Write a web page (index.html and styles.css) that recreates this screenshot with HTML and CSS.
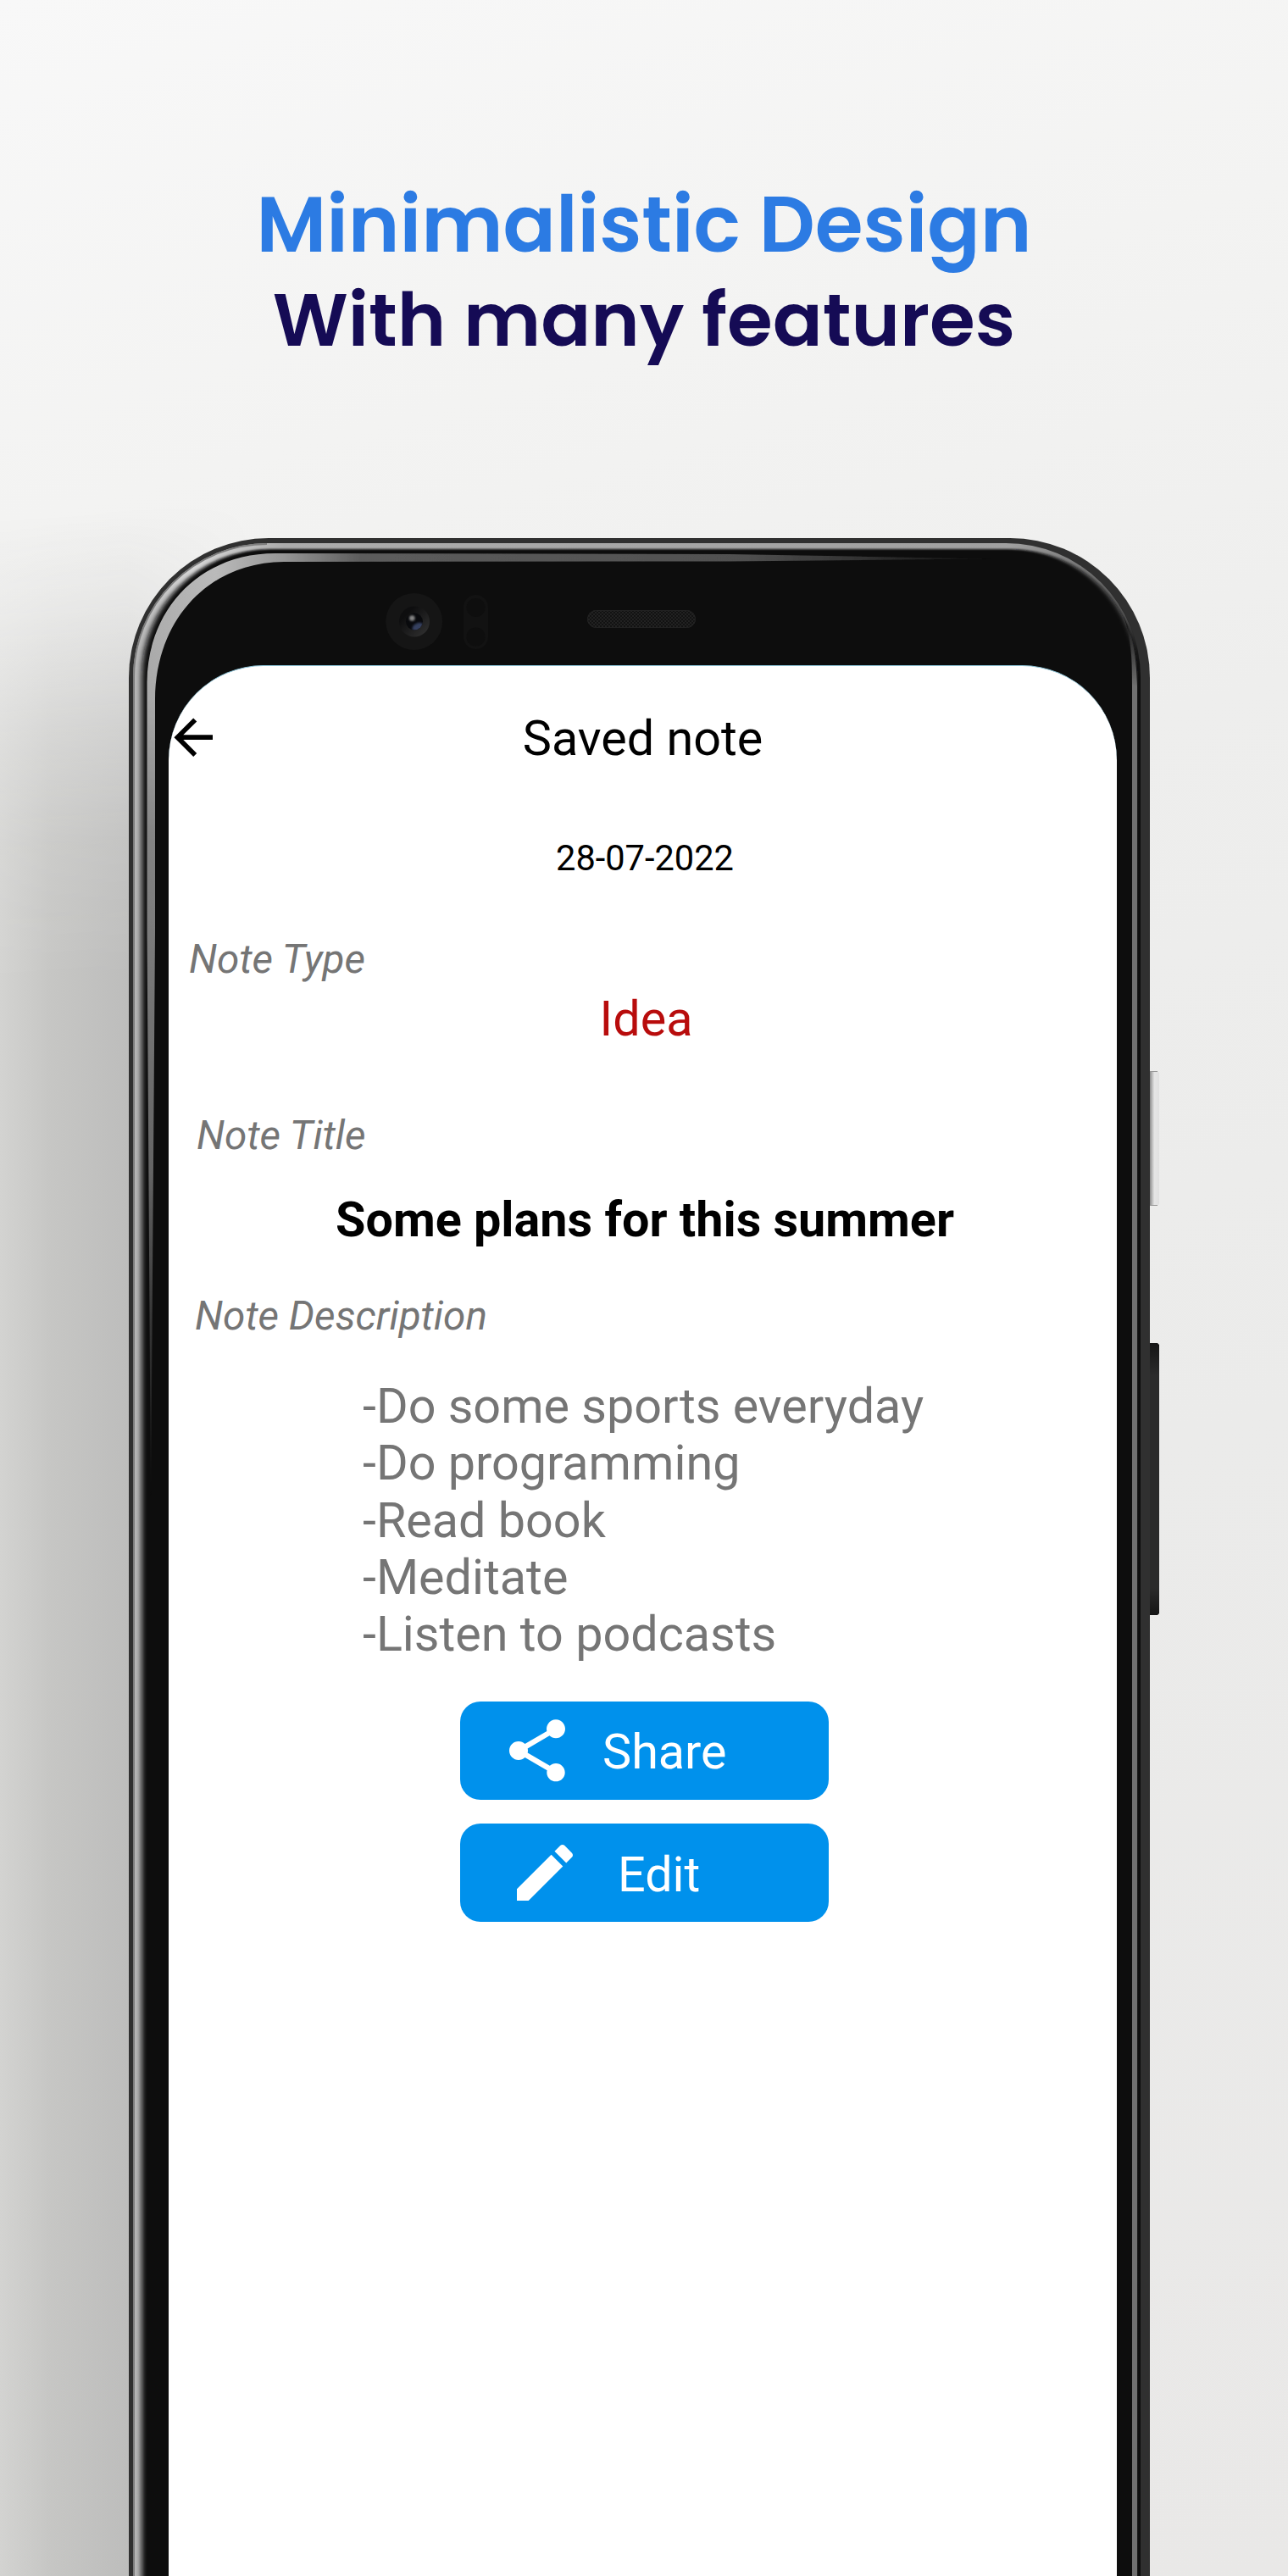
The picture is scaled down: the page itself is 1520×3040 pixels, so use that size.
FILE: index.html
```html
<!DOCTYPE html>
<html lang="en">
<head>
<meta charset="utf-8">
<title>Minimalistic Design</title>
<link rel="stylesheet" href="styles.css">
</head>
<body>
<main class="poster">
  <div class="shade"></div>
  <h1 class="headline">
    <span class="headline-top">Minimalistic Design</span>
    <span class="headline-sub">With many features</span>
  </h1>

  <svg class="phone" width="1520" height="3040" viewBox="0 0 1520 3040" aria-hidden="true">
    <defs>
      <linearGradient id="rim" gradientUnits="userSpaceOnUse" x1="157" y1="0" x2="1346" y2="0">
        <stop offset="0" stop-color="#b4b4b4"/>
        <stop offset=".06" stop-color="#d6d6d6"/>
        <stop offset=".15" stop-color="#acacac"/>
        <stop offset=".87" stop-color="#a0a0a0"/>
        <stop offset=".95" stop-color="#767676"/>
        <stop offset=".985" stop-color="#666"/>
        <stop offset="1" stop-color="#0d0d0d"/>
      </linearGradient>
      <linearGradient id="shine" gradientUnits="userSpaceOnUse" x1="174" y1="0" x2="1180" y2="0">
        <stop offset="0" stop-color="#b0b0b0"/>
        <stop offset=".08" stop-color="#bbb"/>
        <stop offset=".16" stop-color="#979797"/>
        <stop offset=".25" stop-color="#5c5c5c"/>
        <stop offset=".7" stop-color="#505050"/>
        <stop offset="1" stop-color="#0d0d0d"/>
      </linearGradient>
      <linearGradient id="fade" gradientUnits="userSpaceOnUse" x1="0" y1="640" x2="0" y2="1780">
        <stop offset="0" stop-color="#fff"/>
        <stop offset=".16" stop-color="#f4f4f4"/>
        <stop offset=".3" stop-color="#bbb"/>
        <stop offset=".65" stop-color="#8a8a8a"/>
        <stop offset=".8" stop-color="#444"/>
        <stop offset="1" stop-color="#000"/>
      </linearGradient>
      <linearGradient id="edge" gradientUnits="userSpaceOnUse" x1="0" y1="725" x2="0" y2="810">
        <stop offset="0" stop-color="#0d0d0d"/>
        <stop offset="1" stop-color="#707070"/>
      </linearGradient>
      <linearGradient id="power" x1="0" y1="0" x2="1" y2="0">
        <stop offset="0" stop-color="#8c8c8c"/>
        <stop offset=".35" stop-color="#cfcfcf"/>
        <stop offset=".5" stop-color="#e5e5e5"/>
        <stop offset="1" stop-color="#e0e0e0"/>
      </linearGradient>
      <linearGradient id="volume" x1="0" y1="0" x2="0" y2="1">
        <stop offset="0" stop-color="#151515"/>
        <stop offset=".12" stop-color="#2b2b2b"/>
        <stop offset=".9" stop-color="#2b2b2b"/>
        <stop offset="1" stop-color="#151515"/>
      </linearGradient>
      <linearGradient id="lens" x1="0" y1="0" x2="1" y2="1">
        <stop offset=".25" stop-color="#0e0e0f"/>
        <stop offset="1" stop-color="#343434"/>
      </linearGradient>
      <pattern id="mesh" width="4" height="4" patternUnits="userSpaceOnUse">
        <path d="M0 0h2v2H0zM2 2h2v2H2z" fill="#222"/>
      </pattern>
      <filter id="soft" filterUnits="userSpaceOnUse" x="100" y="600" width="1300" height="2500"><feGaussianBlur stdDeviation="3.2 1.1"/></filter>
      <filter id="slight" filterUnits="userSpaceOnUse" x="100" y="600" width="1300" height="2500"><feGaussianBlur stdDeviation=".7"/></filter>
      <filter id="spot" x="-50%" y="-50%" width="200%" height="200%"><feGaussianBlur stdDeviation="1"/></filter>
      <mask id="drop" maskUnits="userSpaceOnUse" x="150" y="630" width="1210" height="1200"><rect x="150" y="630" width="1210" height="1200" fill="url(#fade)"/></mask>
      <clipPath id="inner"><rect x="157" y="641" width="1189" height="2600" rx="157"/></clipPath>
      <clipPath id="pupil"><circle cx="489" cy="733.5" r="10"/></clipPath>
    </defs>

    <path d="M1357 1264h9l2 2v155l-2 2h-9z" fill="url(#power)"/>
    <path d="M1357 1264.5h9M1357 1422.5h9" stroke="#999"/>
    <path d="M1357 1585h9l2 2v317l-2 2h-9z" fill="url(#volume)"/>

    <rect x="152" y="635" width="1205" height="2600" rx="165" fill="#303030"/>
    <rect x="157" y="641" width="1189" height="2600" rx="159" fill="url(#rim)"/>
    <path d="M158 3040V798A157 157 0 0 1 315 642" fill="none" stroke="#7d7d7d" stroke-width="2"/>
    <g clip-path="url(#inner)">
      <rect x="167" y="648" width="1176" height="2600" rx="151" fill="#0b0b0d" filter="url(#soft)"/>
    </g>
    <g mask="url(#drop)">
      <path d="M178 1780L173.5 1100V805C174 720 235 653 325 653L860 654L1170 659.5L860 662.500L335 663C240 664 183 738 183 825V1100Z" fill="url(#shine)" filter="url(#slight)"/>
    </g>
    <path d="M1326 727C1335 755 1336 775 1336 810V3040H1342V810C1341 775 1337 750 1326 727Z" fill="url(#edge)" filter="url(#slight)"/>

    <circle cx="488.700" cy="733.500" r="33.500" fill="#151515"/>
    <circle cx="489" cy="733.500" r="18" fill="url(#lens)"/>
    <circle cx="489" cy="733.500" r="10" fill="#090a0d"/>
    <g clip-path="url(#pupil)"><ellipse cx="493" cy="740" rx="7" ry="4.500" transform="rotate(-28 493 740)" fill="#36415f" filter="url(#spot)"/></g>
    <circle cx="486.300" cy="729.500" r="3.300" fill="#858585" filter="url(#spot)"/>

    <rect x="547" y="702" width="29" height="64" rx="14.500" fill="#121212"/>
    <circle cx="561.500" cy="717" r="11" fill="#0e0e0e"/>
    <circle cx="561.500" cy="751.500" r="11" fill="#0e0e0e"/>

    <rect x="693" y="720" width="128" height="21" rx="10.500" fill="#121212"/>
    <rect x="693" y="720" width="128" height="21" rx="10.500" fill="url(#mesh)"/>
    <rect x="693.500" y="720.500" width="127" height="20" rx="10" fill="none" stroke="#222"/>
  </svg>

  <section class="screen">
    <header class="bar">
      <svg class="back" viewBox="0 0 24 24"><path d="M20 11H7.830l5.590-5.590L12 4l-8 8 8 8 1.410-1.410L7.830 13H20v-2z"/></svg>
      <h2 class="bar-title">Saved note</h2>
    </header>
    <p class="date">28-07-2022</p>
    <p class="label label-type">Note Type</p>
    <p class="type">Idea</p>
    <p class="label label-title">Note Title</p>
    <p class="title">Some plans for this summer</p>
    <p class="label label-desc">Note Description</p>
    <div class="desc">
      <p>-Do some sports everyday</p>
      <p>-Do programming</p>
      <p>-Read book</p>
      <p>-Meditate</p>
      <p>-Listen to podcasts</p>
    </div>
    <div class="actions">
      <button class="btn btn-share">
        <svg class="icon" viewBox="0 0 24 24"><path d="M18 16.080c-.76 0-1.440.3-1.960.77L8.910 12.700c.05-.23.09-.46.09-.7s-.04-.47-.09-.7l7.050-4.110c.54.5 1.250.81 2.040.81 1.660 0 3-1.340 3-3s-1.340-3-3-3-3 1.340-3 3c0 .24.04.47.09.7L8.040 9.810C7.500 9.310 6.790 9 6 9c-1.660 0-3 1.340-3 3s1.340 3 3 3c.79 0 1.500-.31 2.040-.81l7.120 4.160c-.05.21-.08.43-.08.65 0 1.610 1.310 2.920 2.920 2.920s2.920-1.310 2.920-2.920-1.310-2.920-2.920-2.920z"/></svg>
        <span class="btn-text">Share</span>
      </button>
      <button class="btn btn-edit">
        <svg class="icon" viewBox="0 0 24 24"><path d="M3 17.250V21h3.750L17.810 9.940l-3.750-3.750L3 17.250zM20.710 7.040c.39-.39.39-1.020 0-1.410l-2.340-2.340c-.39-.39-1.020-.39-1.410 0l-1.830 1.830 3.750 3.750 1.830-1.830z"/></svg>
        <span class="btn-text">Edit</span>
      </button>
    </div>
  </section>
</main>
</body>
</html>
```
FILE: styles.css
```css
* {
  box-sizing: border-box;
}

body,
h1,
h2,
p {
  margin: 0;
}

.poster {
  position: relative;
  width: 1520px;
  height: 3040px;
  overflow: hidden;
  background: linear-gradient(165deg, #f8f8f8 0%, #f3f3f2 18%, #eeeeed 35%, #ebebea 60%, #e9e8e7 100%);
}

/* soft shadow cast to the left of the phone */
.shade {
  position: absolute;
  left: 0;
  top: 600px;
  width: 320px;
  height: 2440px;
  background: linear-gradient(90deg, #d3d3d1 0, #c6c6c4 60px, #bdbdbc 152px, #bababa 100%);
  -webkit-mask-image: linear-gradient(176deg, transparent 10px, rgba(0, 0, 0, .2) 120px, rgba(0, 0, 0, .62) 270px, rgba(0, 0, 0, .88) 400px, #000 560px), linear-gradient(90deg, #000 150px, transparent 300px);
  -webkit-mask-composite: source-in;
  mask-image: linear-gradient(176deg, transparent 10px, rgba(0, 0, 0, .2) 120px, rgba(0, 0, 0, .62) 270px, rgba(0, 0, 0, .88) 400px, #000 560px), linear-gradient(90deg, #000 150px, transparent 300px);
  mask-composite: intersect;
}

.headline {
  position: relative;
  display: flex;
  flex-direction: column;
  align-items: center;
  padding-top: 207px;
  height: 785px;
  font-family: Poppins, Inter, sans-serif;
  font-weight: 600;
  white-space: nowrap;
}

.headline-top {
  color: #2c7be3;
  font-size: 92px;
  line-height: 115px;
}

.headline-sub {
  color: #150b55;
  font-size: 87px;
  line-height: 111px;
}

.phone {
  position: absolute;
  left: 0;
  top: 0;
}

.screen {
  position: relative;
  width: 1119px;
  height: 2255px;
  margin-left: 199px;
  padding: 52px 0 0 5px;
  border-top: 1px solid #8cc4d8;
  border-radius: 112px 112px 0 0;
  background: #fff;
  color: #000;
  font-family: Roboto, sans-serif;
  font-size: 57.5px;
  line-height: 67.3px;
}

.bar {
  display: grid;
  grid-template-columns: 68.4px 1fr 68.4px;
  height: 67.3px;
  margin: 0 -4.7px 0 -9.7px;
}

.back {
  width: 68.4px;
  height: 68.4px;
  margin-top: -2px;
}

.bar-title {
  font-size: inherit;
  font-weight: 400;
  text-align: center;
}

.date {
  margin-top: 83.6px;
  font-size: 41.6px;
  line-height: 48.5px;
  text-align: center;
}

.label {
  color: #757575;
  font-size: 47.7px;
  font-style: italic;
  line-height: 55.4px;
}

.label-type {
  margin: 67.4px 0 0 19px;
}

.label-title {
  margin: 76.3px 0 0 28px;
}

.label-desc {
  margin: 52.3px 0 0 26px;
}

.type {
  margin: 9.3px 0 0 3px;
  color: #b80c0c;
  text-align: center;
}

.title {
  margin-top: 37.7px;
  font-weight: 700;
  text-align: center;
}

.desc {
  margin: 44.8px 0 0 224px;
  color: #757575;
}

.actions {
  display: flex;
  flex-direction: column;
  gap: 28.5px;
  width: 435px;
  margin: 45.5px 0 0 339px;
}

.btn {
  display: flex;
  align-items: center;
  height: 116px;
  padding: 0;
  border: 0;
  border-radius: 24px;
  background: #0091ec;
  color: #fff;
  font: inherit;
}

.btn-share {
  gap: 33px;
  padding-left: 47px;
}

.btn-edit {
  gap: 42px;
  padding-left: 56px;
}

.icon {
  width: 88px;
  height: 88px;
  fill: currentColor;
}

.btn-text {
  padding-top: 4px;
}
```
